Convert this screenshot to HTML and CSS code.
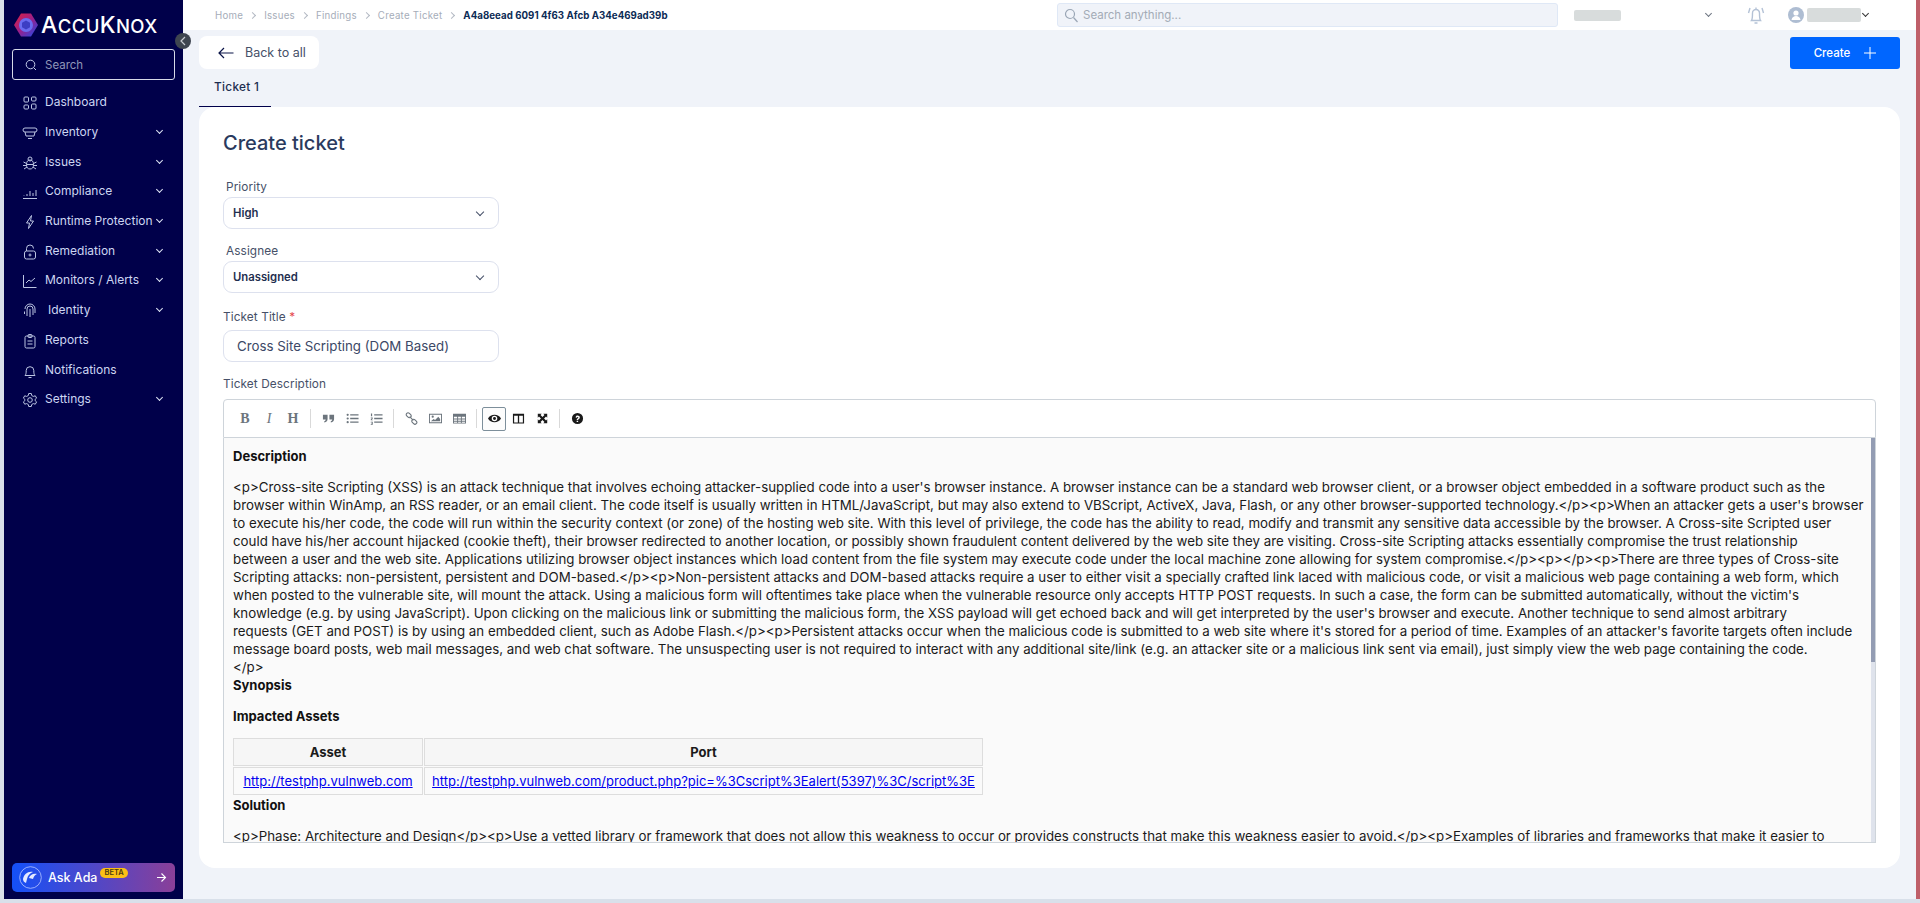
FILE: index.html
```html
<!DOCTYPE html>
<html lang="en">
<head>
    <meta charset="UTF-8">
    <meta name="viewport" content="width=device-width, initial-scale=1.0">
    <title>Create Ticket</title>
    <link rel="stylesheet" href="styles.css">
</head>
<body>
    <div class="app">
        <aside class="sidebar">
            <div class="logo">
                <svg width="26" height="26" viewBox="0 0 26 26">
                    <defs>
                        <linearGradient id="ring" x1="0" y1="0" x2="1" y2="1">
                            <stop offset="0" stop-color="#e0213f"/>
                            <stop offset="0.5" stop-color="#9a1f8a"/>
                            <stop offset="1" stop-color="#1a4df0"/>
                        </linearGradient>
                    </defs>
                    <path d="M8 1.5h10l7 11.500-7 11.500H8L1 13z" fill="url(#ring)"/>
                    <circle cx="13" cy="13" r="7" fill="#6a6cf0"/>
                    <path d="M13 8.500l4 2.200v4.600l-4 2.200-4-2.200v-4.600z" fill="#3c3ec4"/>
                </svg>
                <span class="logo-text">A<small>CCU</small>K<small>NOX</small></span>
            </div>
            <button class="collapse-btn">
                <svg width="8" height="10" viewBox="0 0 8 10"><path d="M6 1L2 5l4 4" fill="none" stroke="#c8ccd2" stroke-width="1.200"/></svg>
            </button>
            <div class="side-search">
                <svg width="12" height="12" viewBox="0 0 12 12"><circle cx="5.500" cy="5.500" r="4.300" fill="none" stroke="#c5cdea"/><path d="M9 9l2 2" stroke="#c5cdea"/></svg>
                <span>Search</span>
            </div>
            <nav class="menu">
                <div class="menu-item">
                    <svg class="menu-icon" viewBox="0 0 16 16"><rect x="2" y="2" width="4.500" height="5" rx="1"/><rect x="9.500" y="2" width="4.500" height="4" rx="1"/><rect x="2" y="10" width="4.500" height="4" rx="1"/><rect x="9.500" y="9" width="4.500" height="5" rx="1"/></svg>
                    <span>Dashboard</span>
                </div>
                <div class="menu-item">
                    <svg class="menu-icon" viewBox="0 0 16 16"><rect x="1" y="3" width="14" height="4" rx="2"/><path d="M3 7l1 4h8l1-4M6 13.500h4"/></svg>
                    <span>Inventory</span><i class="chev"></i>
                </div>
                <div class="menu-item">
                    <svg class="menu-icon" viewBox="0 0 16 16"><ellipse cx="8" cy="9.500" rx="3.500" ry="4.500"/><circle cx="8" cy="4" r="2"/><path d="M1.500 7l3 1.500M14.500 7l-3 1.500M1 10.500h3.500M15 10.500h-3.500M2 14l3-2M14 14l-3-2M4.500 9.500h7"/></svg>
                    <span>Issues</span><i class="chev"></i>
                </div>
                <div class="menu-item">
                    <svg class="menu-icon" viewBox="0 0 16 16"><path d="M1 14.500h14M2 11.500v.5M5 10v2M8 7v5M11 9v3M14 6v6"/></svg>
                    <span>Compliance</span><i class="chev"></i>
                </div>
                <div class="menu-item">
                    <svg class="menu-icon" viewBox="0 0 16 16"><path d="M9.500 1.500L4.500 9h3l-1 5.500 5-7.500h-3z"/></svg>
                    <span>Runtime Protection</span><i class="chev"></i>
                </div>
                <div class="menu-item">
                    <svg class="menu-icon" viewBox="0 0 16 16"><rect x="2.500" y="7" width="11" height="8" rx="2"/><path d="M4.500 7V4.500a3.500 3.500 0 0 1 7 0"/><circle cx="8" cy="11" r="1"/></svg>
                    <span>Remediation</span><i class="chev"></i>
                </div>
                <div class="menu-item">
                    <svg class="menu-icon" viewBox="0 0 16 16"><path d="M1.500 2v12.500h13M4 10l3-3 2 1.500 4-3.500"/></svg>
                    <span>Monitors / Alerts</span><i class="chev"></i>
                </div>
                <div class="menu-item menu-item-inset">
                    <svg class="menu-icon" viewBox="0 0 16 16"><path d="M3 6a5 5 0 0 1 10 0v4M5 13V6a3 3 0 0 1 6 0v6M8 6v8M2.500 8.500v2.500M9.500 14.500"/></svg>
                    <span>Identity</span><i class="chev"></i>
                </div>
                <div class="menu-item">
                    <svg class="menu-icon" viewBox="0 0 16 16"><rect x="3" y="3" width="10" height="12" rx="1.500"/><rect x="6" y="1.500" width="4" height="3" rx="1"/><path d="M5.500 8h5M5.500 11h5"/></svg>
                    <span>Reports</span>
                </div>
                <div class="menu-item">
                    <svg class="menu-icon" viewBox="0 0 16 16"><path d="M3 12.500c1-1 1.200-2.500 1.200-5a3.800 3.800 0 0 1 7.600 0c0 2.500.2 4 1.200 5zM6.500 14.500h3"/></svg>
                    <span>Notifications</span>
                </div>
                <div class="menu-item">
                    <svg class="menu-icon" viewBox="0 0 16 16"><circle cx="8" cy="8" r="2.300"/><path d="M6.700 1.500h2.600l.4 2 1.600.9 2-.6 1.300 2.300-1.500 1.300v1.200l1.500 1.300-1.300 2.300-2-.6-1.600.9-.4 2H6.700l-.4-2-1.600-.9-2 .6-1.300-2.300 1.500-1.300V7.400L1.400 6.100l1.300-2.300 2 .6 1.600-.9z"/></svg>
                    <span>Settings</span><i class="chev"></i>
                </div>
            </nav>
            <div class="ask-ada">
                <svg width="23" height="23" viewBox="0 0 23 23"><circle cx="11.500" cy="11.500" r="10.800" fill="none" stroke="#b9c6ff" stroke-width="0.800"/><path d="M4 13c1-5 5-8 10-7-3 1-5 3-6 7l-1 4c-2-1-3-2-3-4zM10 12c1-3 4-5 8-4-2 1-3 2-4 5z" fill="#e4eaff"/></svg>
                <span class="ada-name">Ask Ada</span>
                <span class="beta">BETA</span>
                <svg class="ada-arrow" width="11" height="11" viewBox="0 0 11 11"><path d="M1 5.500h8.500M5.500 1.500l4 4-4 4" fill="none" stroke="#fff" stroke-width="1.100"/></svg>
            </div>
        </aside>

        <div class="main">
            <header class="topbar">
                <div class="crumbs">
                    <span>Home</span><b class="sep"></b>
                    <span>Issues</span><b class="sep"></b>
                    <span>Findings</span><b class="sep"></b>
                    <span>Create Ticket</span><b class="sep"></b>
                    <strong>A4a8eead 6091 4f63 Afcb A34e469ad39b</strong>
                </div>
                <div class="top-search">
                    <svg width="15" height="15" viewBox="0 0 15 15"><circle cx="6" cy="6" r="4.500" fill="none" stroke="#9aa6b5" stroke-width="1.200"/><path d="M9.500 9.500l4 4.500" stroke="#9aa6b5" stroke-width="1.200"/></svg>
                    <span>Search anything...</span>
                </div>
                <div class="org-block"></div>
                <i class="top-chev"></i>
                <svg class="bell" width="18" height="20" viewBox="0 0 18 20"><path d="M4.500 15.500c1-1.500 1-3.500 1-7.500a3.500 3.500 0 0 1 7 0c0 4 0 6 1 7.500zM7.500 18h3M9 2.500V4.500M3 3L1.500 8M15 3l1.500 5" fill="none" stroke="#b4c2d6" stroke-width="1.400"/></svg>
                <svg class="avatar" width="16" height="16" viewBox="0 0 16 16"><circle cx="8" cy="8" r="8" fill="#aebdd2"/><circle cx="8" cy="6" r="2.600" fill="#fff"/><path d="M3.500 13c.5-3 2.500-4 4.500-4s4 1 4.500 4z" fill="#fff"/></svg>
                <div class="user-block"></div>
                <i class="top-chev top-chev-dark"></i>
            </header>

            <div class="actions">
                <button class="back-btn">
                    <svg width="16" height="12" viewBox="0 0 16 12"><path d="M15.500 6H1M6 1L1 6l5 5" fill="none" stroke="#0b1448" stroke-width="1.200"/></svg>
                    <span>Back to all</span>
                </button>
                <button class="create-btn">
                    <span>Create</span>
                    <svg width="12" height="12" viewBox="0 0 12 12"><path d="M6 0v12M0 6h12" stroke="#fff" stroke-width="1"/></svg>
                </button>
            </div>

            <div class="tabs">
                <div class="tab">Ticket 1</div>
            </div>

            <section class="card">
                <h1>Create ticket</h1>
                <label class="field-label label-inset label-first">Priority</label>
                <div class="select">
                    <span>High</span><i class="select-chev"></i>
                </div>
                <label class="field-label label-inset">Assignee</label>
                <div class="select">
                    <span>Unassigned</span><i class="select-chev"></i>
                </div>
                <label class="field-label label-title">Ticket Title <em>*</em></label>
                <div class="text-input">Cross Site Scripting (DOM Based)</div>
                <label class="field-label label-desc">Ticket Description</label>

                <div class="editor">
                    <div class="toolbar">
                        <button class="tool tool-text tool-b">B</button>
                        <button class="tool tool-text tool-i">I</button>
                        <button class="tool tool-text">H</button>
                        <i class="tool-sep"></i>
                        <button class="tool"><svg class="ico-gray" viewBox="0 0 14 14"><path d="M1 3h5v4.500c0 2-1 3.300-3.500 3.800v-1.500C3.500 9.500 4 9 4 8H1zM8 3h5v4.500c0 2-1 3.300-3.500 3.800v-1.500c1-.3 1.500-.8 1.500-1.800H8z"/></svg></button>
                        <button class="tool"><svg class="ico-gray" viewBox="0 0 14 14"><circle cx="1.800" cy="3" r="1.200"/><circle cx="1.800" cy="7" r="1.200"/><circle cx="1.800" cy="11" r="1.200"/><path d="M4.500 2.300h9v1.400h-9zM4.500 6.300h9v1.400h-9zM4.500 10.300h9v1.400h-9z"/></svg></button>
                        <button class="tool"><svg class="ico-gray" viewBox="0 0 14 14"><path d="M1 1.500h1.300v3H1zM.8 6h2.200v1L1.800 8.300H3v.7H.8V8L2 6.700H.8zM.8 10.500H3v3.200H.8V13h1.400v-.5H1.200v-.6h1v-.7H.8zM4.500 2.300h9v1.400h-9zM4.500 6.300h9v1.400h-9zM4.500 10.300h9v1.400h-9z"/></svg></button>
                        <i class="tool-sep"></i>
                        <button class="tool"><svg class="ico-line" viewBox="0 0 14 14"><rect x="1" y="1.500" width="6" height="4" rx="2" transform="rotate(45 4 3.500)"/><rect x="7" y="8.500" width="6" height="4" rx="2" transform="rotate(45 10 10.500)"/><path d="M5 5l4 4"/></svg></button>
                        <button class="tool"><svg class="ico-gray" viewBox="0 0 14 14"><path fill-rule="evenodd" d="M0 2h14v10H0zM1 3v8h12V3z"/><circle cx="4" cy="5" r="1.200"/><path d="M2 10l3-2.500 1.500 1L10 5l2 2.500V10z"/></svg></button>
                        <button class="tool"><svg class="ico-gray" viewBox="0 0 14 14"><path fill-rule="evenodd" d="M0 2h14v10.500H0zM1 5v2h3.500V5zM5.500 5v2h3V5zM9.500 5v2H13V5zM1 8v1.500h3.500V8zM5.500 8v1.500h3V8zM9.500 8v1.500H13V8zM1 10.500v1h3.500v-1zM5.500 10.500v1h3v-1zM9.500 10.500v1H13v-1z"/></svg></button>
                        <i class="tool-sep"></i>
                        <button class="tool tool-active"><svg class="ico-dark" viewBox="0 0 14 14"><path fill-rule="evenodd" d="M0 7c1.500-2.800 4-4 7-4s5.500 1.200 7 4c-1.500 2.800-4 4-7 4S1.500 9.800 0 7zm7 3a3 3 0 1 0 0-6 3 3 0 0 0 0 6z"/><circle cx="7" cy="7" r="1.600"/></svg></button>
                        <button class="tool"><svg class="ico-dark" viewBox="0 0 14 14"><path fill-rule="evenodd" d="M1 2h12v10.500H1zM2.300 4v7.200h4V4zM7.700 4v7.200h4V4z"/></svg></button>
                        <button class="tool"><svg class="ico-dark ico-small" viewBox="0 0 14 14"><path d="M1 1h5L4.500 2.500 7 5l2.500-2.500L8 1h5v5l-1.500-1.500L9 7l2.500 2.500L13 8v5H8l1.500-1.500L7 9l-2.500 2.500L6 13H1V8l1.500 1.500L5 7 2.500 4.500 1 6z"/></svg></button>
                        <i class="tool-sep"></i>
                        <button class="tool"><svg class="ico-dark" viewBox="0 0 14 14"><path fill-rule="evenodd" d="M7 1a6 6 0 1 1 0 12A6 6 0 0 1 7 1zM6.100 9.300v1.500h1.600V9.300zM5 5.800l1.200.5c.1-.7.400-1 .9-1 .5 0 .8.300.8.700 0 .9-1.800 1-1.800 2.700h1.500c0-1.100 1.900-1.200 1.900-2.900C9.500 4.600 8.400 3.800 7 3.800c-1.100 0-1.800.7-2 2z"/></svg></button>
                    </div>
                    <div class="preview-wrap">
                        <div class="preview">
                            <h4>Description</h4>
                            <p class="md-text">&lt;p&gt;Cross-site Scripting (XSS) is an attack technique that involves echoing attacker-supplied code into a user's browser instance. A browser instance can be a standard web browser client, or a browser object embedded in a software product such as the<br>
                            browser within WinAmp, an RSS reader, or an email client. The code itself is usually written in HTML/JavaScript, but may also extend to VBScript, ActiveX, Java, Flash, or any other browser-supported technology.&lt;/p&gt;&lt;p&gt;When an attacker gets a user's browser<br>
                            to execute his/her code, the code will run within the security context (or zone) of the hosting web site. With this level of privilege, the code has the ability to read, modify and transmit any sensitive data accessible by the browser. A Cross-site Scripted user<br>
                            could have his/her account hijacked (cookie theft), their browser redirected to another location, or possibly shown fraudulent content delivered by the web site they are visiting. Cross-site Scripting attacks essentially compromise the trust relationship<br>
                            between a user and the web site. Applications utilizing browser object instances which load content from the file system may execute code under the local machine zone allowing for system compromise.&lt;/p&gt;&lt;p&gt;&lt;/p&gt;&lt;p&gt;There are three types of Cross-site<br>
                            Scripting attacks: non-persistent, persistent and DOM-based.&lt;/p&gt;&lt;p&gt;Non-persistent attacks and DOM-based attacks require a user to either visit a specially crafted link laced with malicious code, or visit a malicious web page containing a web form, which<br>
                            when posted to the vulnerable site, will mount the attack. Using a malicious form will oftentimes take place when the vulnerable resource only accepts HTTP POST requests. In such a case, the form can be submitted automatically, without the victim's<br>
                            knowledge (e.g. by using JavaScript). Upon clicking on the malicious link or submitting the malicious form, the XSS payload will get echoed back and will get interpreted by the user's browser and execute. Another technique to send almost arbitrary<br>
                            requests (GET and POST) is by using an embedded client, such as Adobe Flash.&lt;/p&gt;&lt;p&gt;Persistent attacks occur when the malicious code is submitted to a web site where it's stored for a period of time. Examples of an attacker's favorite targets often include<br>
                            message board posts, web mail messages, and web chat software. The unsuspecting user is not required to interact with any additional site/link (e.g. an attacker site or a malicious link sent via email), just simply view the web page containing the code.<br>
                            &lt;/p&gt;</p>
                            <h4>Synopsis</h4>
                            <h4>Impacted Assets</h4>
                            <table>
                                <thead>
                                    <tr>
                                        <th class="col-asset">Asset</th>
                                        <th>Port</th>
                                    </tr>
                                </thead>
                                <tbody>
                                    <tr>
                                        <td><a href="#">http://testphp.vulnweb.com</a></td>
                                        <td><a href="#">http://testphp.vulnweb.com/product.php?pic=%3Cscript%3Ealert(5397)%3C/script%3E</a></td>
                                    </tr>
                                </tbody>
                            </table>
                            <h4>Solution</h4>
                            <p class="md-text">&lt;p&gt;Phase: Architecture and Design&lt;/p&gt;&lt;p&gt;Use a vetted library or framework that does not allow this weakness to occur or provides constructs that make this weakness easier to avoid.&lt;/p&gt;&lt;p&gt;Examples of libraries and frameworks that make it easier to</p>
                        </div>
                        <div class="scroll-track"><div class="scroll-thumb"></div></div>
                    </div>
                </div>
            </section>
        </div>
    </div>
</body>
</html>
```
FILE: styles.css
```css
* {
    box-sizing: border-box;
}
html, body {
    height: 100%;
}
body {
    margin: 0;
    padding: 0 0 4px 4px;
    overflow: hidden;
    background: #d9e0ea;
    font-family: Inter, "Open Sans", sans-serif;
    color: #1f2a44;
}
button {
    font-family: inherit;
    border: none;
    cursor: pointer;
}
.app {
    display: flex;
    height: 100%;
}

/* sidebar */
.sidebar {
    position: relative;
    display: flex;
    flex-direction: column;
    flex: 0 0 179px;
    background: #00004a;
    color: #cdd6f2;
}
.logo {
    display: flex;
    align-items: center;
    gap: 2px;
    height: 49px;
    padding: 1px 0 0 9px;
}
.logo-text {
    font-size: 23px;
    font-weight: 500;
    letter-spacing: 0.4px;
    color: #fff;
}
.logo-text small {
    font-size: 18.500px;
}
.collapse-btn {
    position: absolute;
    top: 33px;
    right: -8px;
    width: 16px;
    height: 16px;
    padding: 0;
    display: flex;
    align-items: center;
    justify-content: center;
    border-radius: 50%;
    background: #3e4550;
}
.side-search {
    display: flex;
    align-items: center;
    gap: 8px;
    height: 31px;
    margin: 0 8px;
    padding-left: 12px;
    border: 1px solid #d6dae8;
    border-radius: 3px;
    font-size: 11.500px;
    color: #8f96b8;
}
.menu {
    padding-top: 7px;
}
.menu-item {
    display: flex;
    align-items: center;
    height: 29.700px;
    padding-left: 18px;
    font-size: 12px;
    white-space: nowrap;
}
.menu-item-inset span {
    margin-left: 3px;
}
.menu-icon {
    flex: 0 0 16px;
    width: 16px;
    height: 16px;
    margin: 3px 7px 0 0;
    fill: none;
    stroke: #bcc5e2;
    stroke-width: 1;
}
.chev {
    position: absolute;
    left: 153px;
    width: 5px;
    height: 5px;
    margin-top: -2px;
    border-right: 1.500px solid #dfe4f5;
    border-bottom: 1.500px solid #dfe4f5;
    transform: rotate(45deg);
}
.ask-ada {
    display: flex;
    align-items: center;
    height: 29px;
    margin: auto 8px 7px;
    padding: 0 8px 0 7px;
    border-radius: 5px;
    background: linear-gradient(90deg, #1450f8 0%, #8a3f98 100%);
    color: #fff;
}
.ada-name {
    margin-left: 6px;
    font-size: 12.500px;
    font-weight: 500;
}
.beta {
    margin: -9px 0 0 3px;
    padding: 0 4px;
    border-radius: 6px;
    background: #fbbf16;
    color: #4a3a10;
    font-size: 7.500px;
    font-weight: 600;
    line-height: 10px;
}
.ada-arrow {
    margin-left: auto;
}

/* main column */
.main {
    display: flex;
    flex-direction: column;
    flex: 1;
    min-width: 0;
    background: #f0f3f9;
    border-right: 4px solid #bf5f69;
}
.topbar {
    display: flex;
    align-items: center;
    flex: 0 0 30px;
    padding-left: 32px;
    background: #fff;
}
.crumbs {
    display: flex;
    align-items: center;
    flex: 0 0 842px;
    font-size: 9.700px;
    letter-spacing: 0.25px;
    color: #a6adb9;
}
.crumbs strong {
    font-size: 9.700px;
    font-weight: 700;
    letter-spacing: 0.05px;
    color: #0c2b55;
}
.sep {
    width: 5px;
    height: 5px;
    margin: 0 9px 0 7px;
    border-top: 1px solid #b3b9c3;
    border-right: 1px solid #b3b9c3;
    transform: rotate(45deg);
}
.top-search {
    display: flex;
    align-items: center;
    gap: 4px;
    flex: 0 0 501px;
    height: 24px;
    padding-left: 6px;
    border: 1px solid #dfe8f6;
    border-radius: 3px;
    background: #f0f3f9;
    font-size: 11.500px;
    color: #a3abb6;
}
.org-block {
    width: 47px;
    height: 11px;
    margin-left: 16px;
    border-radius: 2px;
    background: #d8dcdc;
}
.top-chev {
    width: 5px;
    height: 5px;
    margin: -3px 0 0 85px;
    border-right: 1px solid #6c7480;
    border-bottom: 1px solid #6c7480;
    transform: rotate(45deg);
}
.bell {
    margin-left: 36px;
}
.avatar {
    margin-left: 23px;
}
.user-block {
    width: 54px;
    height: 14px;
    margin-left: 3px;
    border-radius: 2px;
    background: #d8dcdc;
}
.top-chev-dark {
    margin-left: 2px;
    border-color: #333;
}
.actions {
    display: flex;
    justify-content: space-between;
    align-items: flex-start;
    flex: 0 0 39px;
    padding: 6px 16px 0;
}
.back-btn {
    display: flex;
    align-items: center;
    gap: 11px;
    width: 120px;
    height: 33px;
    padding-left: 19px;
    border-radius: 8px;
    background: #fff;
    font-size: 12.500px;
    color: #465068;
}
.create-btn {
    display: flex;
    align-items: center;
    justify-content: center;
    gap: 14px;
    width: 110px;
    height: 32px;
    margin-top: 1px;
    border-radius: 3px;
    background: #0066ff;
    color: #fff;
    font-size: 11.500px;
    font-weight: 500;
}
.tabs {
    flex: 0 0 38px;
    padding-left: 16px;
}
.tab {
    width: 72px;
    height: 38px;
    padding: 11px 0 0 15px;
    border-bottom: 1px solid #00004a;
    font-size: 11.800px;
    font-weight: 500;
    letter-spacing: 0.3px;
    color: #1c2d4f;
}

/* ticket card */
.card {
    display: flex;
    flex-direction: column;
    flex: 1;
    min-height: 0;
    margin: 0 16px 31px;
    padding: 22px 24px 25px;
    border-radius: 16px;
    background: #fff;
}
.card h1 {
    margin: 0;
    font-size: 20px;
    line-height: 28px;
    font-weight: 500;
    color: #2a3a5e;
}
.field-label {
    display: block;
    margin-top: 13px;
    font-size: 11.800px;
    line-height: 18px;
    letter-spacing: 0.1px;
    color: #465068;
}
.label-inset {
    padding-left: 3px;
}
.label-first {
    margin-top: 21px;
    margin-bottom: 1px;
}
.label-title {
    margin-top: 15px;
    margin-bottom: 4px;
}
.label-title em {
    font-style: normal;
    color: #e5484d;
}
.label-desc {
    margin-bottom: 6px;
}
.label-inset + .select {
    margin-top: 1px;
}
.label-first + .select {
    margin-top: 0;
}
.select, .text-input {
    display: flex;
    align-items: center;
    flex: 0 0 32px;
    width: 276px;
    height: 32px;
    border: 1px solid #dde1ee;
    border-radius: 9px;
}
.select {
    justify-content: space-between;
    padding: 0 15px 0 9px;
    font-size: 11.300px;
    font-weight: 600;
    color: #1f2f50;
}
.select-chev {
    width: 6px;
    height: 6px;
    margin-top: -3px;
    border-right: 1px solid #455068;
    border-bottom: 1px solid #455068;
    transform: rotate(45deg);
}
.text-input {
    padding-left: 13px;
    font-size: 13.300px;
    color: #3c4866;
}

/* markdown editor */
.editor {
    display: flex;
    flex-direction: column;
    flex: 1;
    min-height: 0;
}
.toolbar {
    display: flex;
    align-items: center;
    flex: 0 0 39px;
    padding-left: 9px;
    border: 1px solid #ced4da;
    border-radius: 4px 4px 0 0;
}
.tool {
    display: flex;
    align-items: center;
    justify-content: center;
    width: 24px;
    height: 24px;
    padding: 0;
    border: 1px solid transparent;
    border-radius: 2px;
    background: none;
}
.tool svg {
    width: 13px;
    height: 13px;
}
.tool .ico-small {
    width: 11px;
    height: 11px;
}
.tool-text {
    font-family: "Liberation Serif", serif;
    font-size: 14px;
    font-weight: 700;
    color: #6c757d;
}
.tool-i {
    font-style: italic;
    font-weight: 400;
}
.tool-active {
    border-color: #7d8f9b;
    background: #fcfcfc;
}
.ico-gray {
    fill: #6c757d;
}
.ico-dark {
    fill: #1a1a1a;
}
.ico-line {
    fill: none;
    stroke: #6c757d;
    stroke-width: 1.200;
}
.tool-sep {
    width: 1px;
    height: 19px;
    margin: 0 5px 0 5px;
    background: #d9d9d9;
}
.preview-wrap {
    position: relative;
    flex: 1;
    min-height: 0;
}
.preview {
    height: 100%;
    overflow: hidden;
    padding: 9px 0 0 9px;
    border: 1px solid #ced4da;
    border-top: none;
    background: #fafafa;
    font-size: 13.300px;
    line-height: 18px;
    color: #1b1b1b;
}
.scroll-track {
    position: absolute;
    top: 0;
    right: 1px;
    bottom: 1px;
    width: 4px;
    background: #dfe3ec;
}
.scroll-thumb {
    height: 224px;
    background: #939cb3;
}
.preview h4 {
    margin: 0 0 13px;
    font-size: 13px;
    line-height: 18px;
    font-weight: 700;
    color: #111;
}
.md-text {
    margin: 0;
    white-space: nowrap;
}
.preview table {
    width: 752px;
    margin: -1px 0 0 -1px;
    border-collapse: separate;
    border-spacing: 1px;
    table-layout: fixed;
    font-size: 13px;
}
.preview th, .preview td {
    padding: 0;
    height: 28px;
    border: 1px solid #ddd;
    text-align: center;
    white-space: nowrap;
    overflow: hidden;
}
.preview th {
    background: #f6f6f6;
    font-weight: 700;
}
.col-asset {
    width: 190px;
}
.preview a {
    color: #0000ee;
}
```
